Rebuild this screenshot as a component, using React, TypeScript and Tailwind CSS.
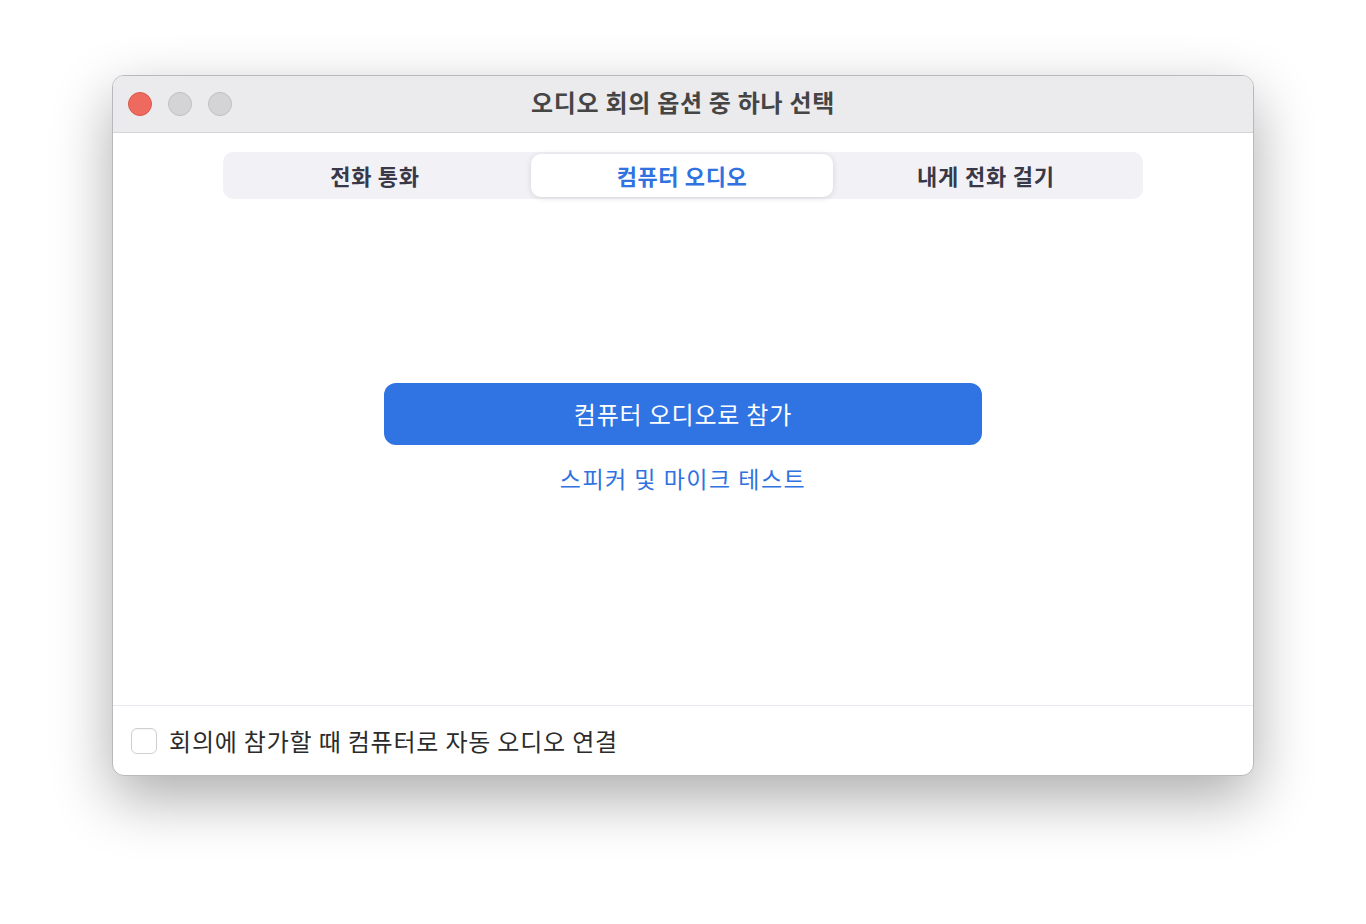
import { useState } from "react";

const font = { fontFamily: '"Noto Sans CJK KR", "Noto Sans", sans-serif' };

const tabs = ["전화 통화", "컴퓨터 오디오", "내게 전화 걸기"];

const App = () => {
  const [active, setActive] = useState(1);
  const [autoJoin, setAutoJoin] = useState(false);

  return (
    <div className="min-h-screen w-full bg-white pt-[75px] pl-[112px]" style={font}>
      <div className="w-[1142px] h-[701px] rounded-[12px] bg-white border border-[#b9b9bd] shadow-[0_22px_60px_rgba(0,0,0,0.33)] overflow-hidden flex flex-col">
        {/* Title bar */}
        <div className="relative h-[57px] shrink-0 bg-[#ebebee] border-b border-[#d4d4d8] flex items-center justify-center">
          <div className="absolute left-[15px] top-[16px] flex gap-[16px]">
            <span className="w-[24px] h-[24px] rounded-full bg-[#ee6a5f] border border-[#d9584d]" />
            <span className="w-[24px] h-[24px] rounded-full bg-[#d4d4d6] border border-[#bfbfc2]" />
            <span className="w-[24px] h-[24px] rounded-full bg-[#d4d4d6] border border-[#bfbfc2]" />
          </div>
          <h1 className="-mt-[4px] text-[24px] font-bold text-[#454545] tracking-[0.7px]">오디오 회의 옵션 중 하나 선택</h1>
        </div>

        {/* Body */}
        <div className="flex-1 flex flex-col items-center">
          <div className="mt-[19px] w-[920px] h-[47px] rounded-[10px] bg-[#f2f2f6] p-[2px] grid grid-cols-[306px_302px_306px]">
            {tabs.map((t, i) => (
              <button
                key={t}
                onClick={() => setActive(i)}
                className={
                  i === active
                    ? "rounded-[10px] bg-white shadow-[0_1px_6px_rgba(0,0,0,0.12)] text-[22px] font-bold tracking-[0.6px] text-[#2f72e0]"
                    : i === 0
                    ? "rounded-[10px] pr-[6px] text-[22px] font-bold tracking-[0.7px] text-[#383848]"
                    : "rounded-[10px] text-[22px] font-bold tracking-[0.8px] text-[#383848]"
                }
              >
                {t}
              </button>
            ))}
          </div>

          <button className="mt-[184px] w-[598px] h-[62px] rounded-[12px] bg-[#3074e4] text-white text-[24px] tracking-[0.8px]">
            컴퓨터 오디오로 참가
          </button>
          <a className="mt-[16px] text-[23px] tracking-[1.5px] text-[#2f72e0] cursor-pointer">스피커 및 마이크 테스트</a>
        </div>

        {/* Footer */}
        <div className="h-[70px] shrink-0 border-t border-[#e8e8ee] flex items-center pl-[18px] gap-[12px]">
          <button
            onClick={() => setAutoJoin(!autoJoin)}
            className="w-[26px] h-[26px] rounded-[6px] border border-[#cfcfd3] bg-white shadow-[inset_0_1px_1px_rgba(0,0,0,0.04)]"
          />
          <span className="text-[24px] tracking-[0.8px] text-[#2b2b2b]">회의에 참가할 때 컴퓨터로 자동 오디오 연결</span>
        </div>
      </div>
    </div>
  );
};

export default App;
